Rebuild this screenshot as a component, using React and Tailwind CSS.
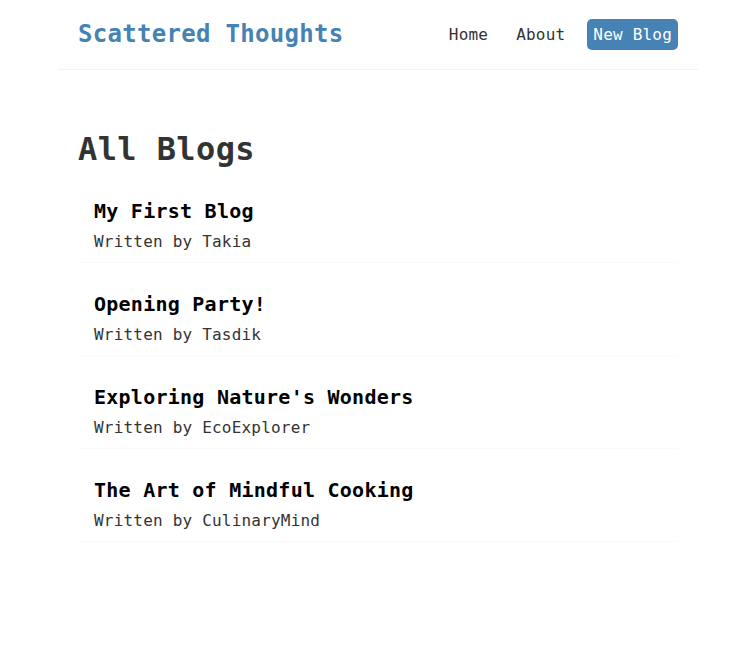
export default function App() {
  const blogs = [
    { title: "My First Blog", author: "Takia" },
    { title: "Opening Party!", author: "Tasdik" },
    { title: "Exploring Nature's Wonders", author: "EcoExplorer" },
    { title: "The Art of Mindful Cooking", author: "CulinaryMind" },
  ];
  return (
    <div className="min-h-[669px] bg-white text-[#333]" style={{ fontFamily: '"DejaVu Sans Mono", "Liberation Mono", monospace' }}>
      <nav className="mx-auto flex w-[640px] items-center border-b border-[#f2f2f2] px-5 py-[19px]">
        <h1 className="text-[24px] font-bold leading-[31px] tracking-[0.3px] text-[#4682b4]">Scattered Thoughts</h1>
        <div className="ml-auto flex items-center">
          <a className="ml-4 p-[6px] text-[16px] leading-[19px] tracking-[0.2px] text-[#333]">Home</a>
          <a className="ml-4 p-[6px] text-[16px] leading-[19px] tracking-[0.2px] text-[#333]">About</a>
          <a className="ml-4 rounded-[5px] bg-[#4682b4] p-[6px] text-[16px] leading-[19px] tracking-[0.2px] text-white">New Blog</a>
        </div>
      </nav>
      <div className="mx-auto w-[640px] px-5 pt-[60px]">
        <h2 className="text-[32px] font-bold leading-[38px] tracking-[0.4px] text-[#333]">All Blogs</h2>
        <div className="mt-[22px] flex flex-col gap-5">
          {blogs.map((b) => (
            <div key={b.title} className="border-b border-[#fafafa] px-4 pt-[9px] pb-[10px]">
              <h2 className="mb-[9px] text-[20px] font-bold leading-[24px] tracking-[0.25px] text-black">{b.title}</h2>
              <p className="text-[16px] leading-[20px] tracking-[0.2px] text-[#333]">Written by {b.author}</p>
            </div>
          ))}
        </div>
      </div>
    </div>
  );
}
